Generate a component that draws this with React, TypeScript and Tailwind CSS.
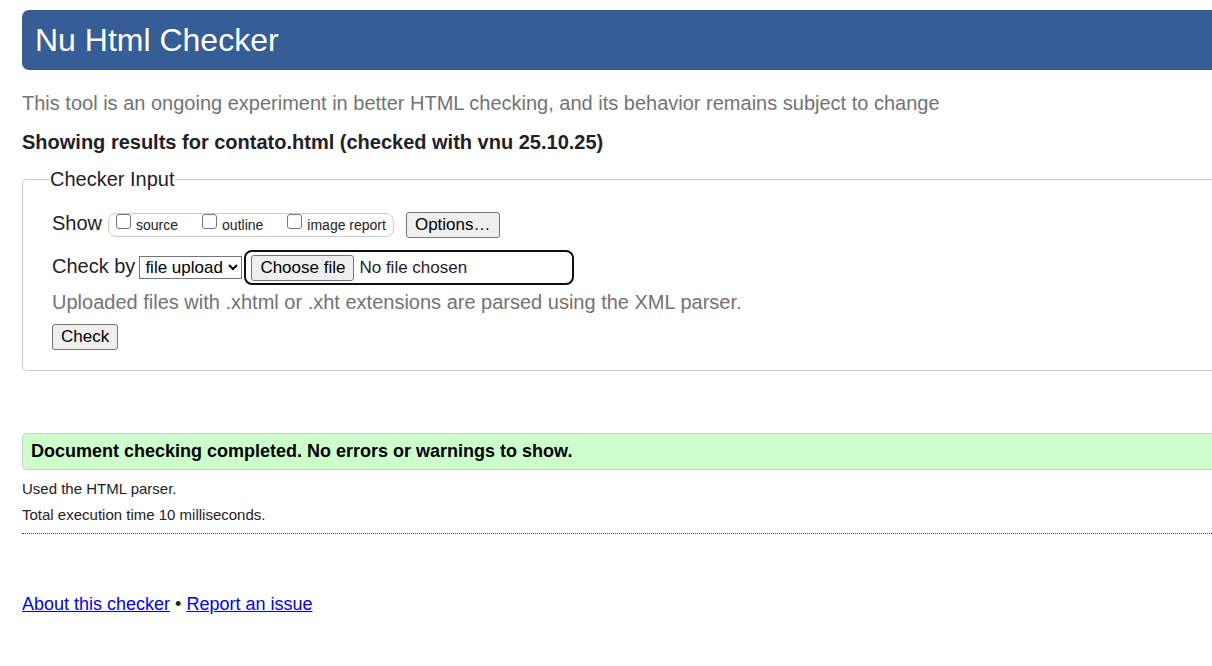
import { useState } from "react";

const SHOW_OPTIONS = ["source", "outline", "image report"];

const buttonClass =
  "h-[26px] rounded-[3px] border border-[#767676] bg-[#efefef] px-2 text-[17px] leading-6 text-black";

function ShowOptions() {
  return (
    <div className="flex h-6 items-start gap-6 rounded-[8px] border border-[#cccccc] px-[7px]">
      {SHOW_OPTIONS.map((name) => (
        <label key={name} className="flex items-start gap-[5px] text-[14px] leading-[22px]">
          <input
            type="checkbox"
            className="size-[15px] appearance-none rounded-[3px] border border-[#767676] bg-white checked:bg-[#0075ff]"
          />
          {name}
        </label>
      ))}
    </div>
  );
}

function FilePicker() {
  const [fileName, setFileName] = useState("No file chosen");
  return (
    <label
      htmlFor="upload"
      className="relative ml-0.5 flex h-[35px] w-[330px] items-center gap-[5px] rounded-[8px] border-2 border-[#101010] px-[5px] text-[17px] leading-6"
    >
      <input
        id="upload"
        type="file"
        className="sr-only"
        onChange={(event) => setFileName(event.target.files?.[0]?.name ?? "No file chosen")}
      />
      <span className={buttonClass}>Choose file</span>
      <span>{fileName}</span>
    </label>
  );
}

function CheckerForm() {
  return (
    <fieldset className="mt-[11px] rounded-l-[5px] border border-r-0 border-[#cccccc] pb-5 pl-[27px]">
      <legend className="leading-[26px]">Checker Input</legend>
      <form className="flex flex-col items-start pl-0.5" onSubmit={(event) => event.preventDefault()}>
        <div className="mt-5 flex items-center">
          <span className="mr-1.5 pb-1 leading-5">Show</span>
          <ShowOptions />
          <button type="button" className={`ml-3 ${buttonClass}`}>
            Options…
          </button>
        </div>
        <div className="mt-3 flex items-center">
          <label htmlFor="check-by" className="mr-1 pb-1 leading-5">
            Check by
          </label>
          <select
            id="check-by"
            className="h-[23px] w-[103px] rounded-none border border-[#767676] bg-white pl-px text-[17px] leading-5 text-black"
          >
            <option>file upload</option>
            <option>address</option>
            <option>text input</option>
          </select>
          <FilePicker />
        </div>
        <p className="mt-1 leading-[26px] text-[#737373]">
          Uploaded files with .xhtml or .xht extensions are parsed using the XML parser.
        </p>
        <button type="submit" className={`mt-[9px] ${buttonClass}`}>
          Check
        </button>
      </form>
    </fieldset>
  );
}

export default function App() {
  return (
    <div className="min-h-screen bg-white pt-2.5 pl-[22px] font-['Liberation_Sans',Arial,sans-serif] text-[20px] text-[#1f2126]">
      <header className="rounded-l-[7px] bg-[#365d95] px-[13px]">
        <h1 className="text-[32px] leading-[60px] text-white">Nu Html Checker</h1>
      </header>
      <main>
        <p className="mt-5 leading-[26px] text-[#737373]">
          This tool is an ongoing experiment in better HTML checking, and its behavior remains subject to change
        </p>
        <h2 className="mt-[13px] leading-[26px] font-bold">
          Showing results for contato.html (checked with vnu 25.10.25)
        </h2>
        <CheckerForm />
        <p className="mt-[62px] rounded-l-[5px] border border-r-0 border-[#cccccc] bg-[#ccffcc] px-2 text-[18px] leading-[35px] font-bold text-black">
          Document checking completed. No errors or warnings to show.
        </p>
        <div className="mt-1.5 border-b border-dotted border-[#444444] pb-[5px] text-[15px] leading-[26px]">
          <p>Used the HTML parser.</p>
          <p>Total execution time 10 milliseconds.</p>
        </div>
      </main>
      <footer className="mt-[57px] text-[18px] leading-[26px]">
        <a href="#about" className="text-[#0000ee] underline">
          About this checker
        </a>{" "}
        •{" "}
        <a href="#issues" className="text-[#0000ee] underline">
          Report an issue
        </a>
      </footer>
    </div>
  );
}
